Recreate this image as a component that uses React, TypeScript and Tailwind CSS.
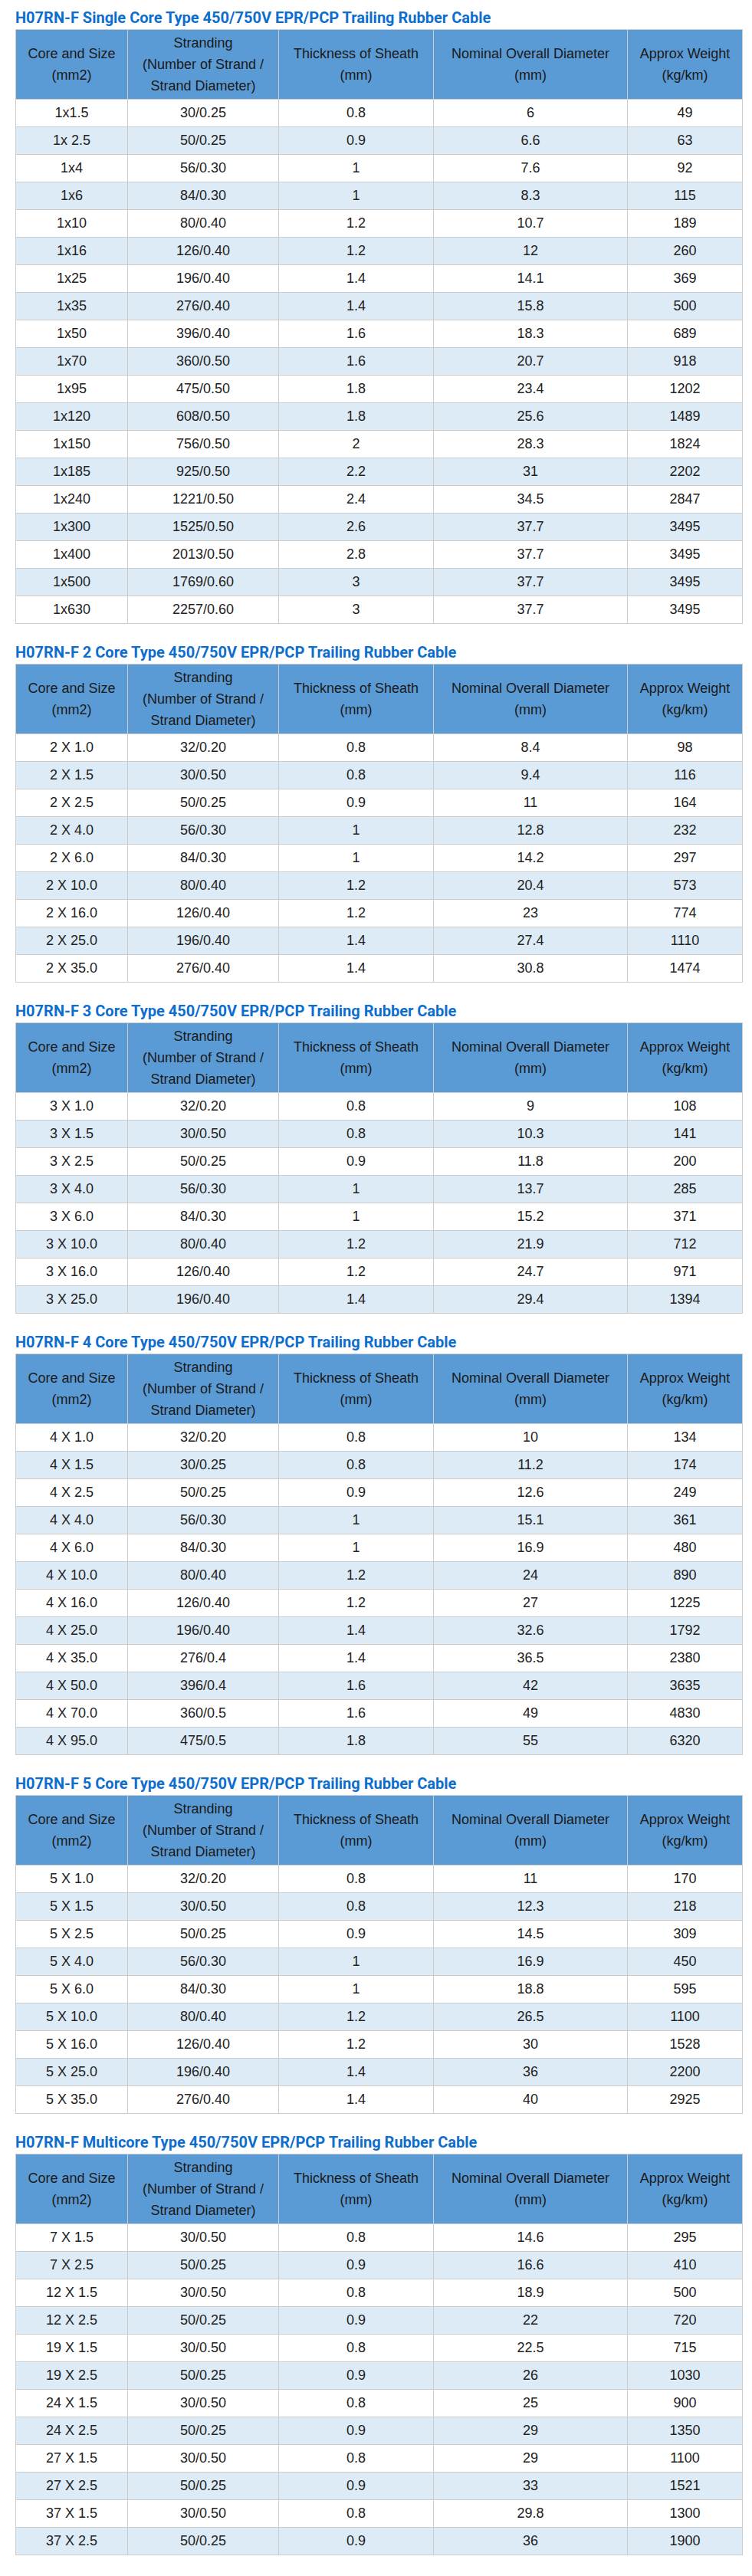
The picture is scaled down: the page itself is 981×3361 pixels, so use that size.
import React from "react";

type Row = [string, string, string, string, string];

const t1: Row[] = [
  ["1x1.5", "30/0.25", "0.8", "6", "49"],
  ["1x 2.5", "50/0.25", "0.9", "6.6", "63"],
  ["1x4", "56/0.30", "1", "7.6", "92"],
  ["1x6", "84/0.30", "1", "8.3", "115"],
  ["1x10", "80/0.40", "1.2", "10.7", "189"],
  ["1x16", "126/0.40", "1.2", "12", "260"],
  ["1x25", "196/0.40", "1.4", "14.1", "369"],
  ["1x35", "276/0.40", "1.4", "15.8", "500"],
  ["1x50", "396/0.40", "1.6", "18.3", "689"],
  ["1x70", "360/0.50", "1.6", "20.7", "918"],
  ["1x95", "475/0.50", "1.8", "23.4", "1202"],
  ["1x120", "608/0.50", "1.8", "25.6", "1489"],
  ["1x150", "756/0.50", "2", "28.3", "1824"],
  ["1x185", "925/0.50", "2.2", "31", "2202"],
  ["1x240", "1221/0.50", "2.4", "34.5", "2847"],
  ["1x300", "1525/0.50", "2.6", "37.7", "3495"],
  ["1x400", "2013/0.50", "2.8", "37.7", "3495"],
  ["1x500", "1769/0.60", "3", "37.7", "3495"],
  ["1x630", "2257/0.60", "3", "37.7", "3495"],
];

const t2: Row[] = [
  ["2 X 1.0", "32/0.20", "0.8", "8.4", "98"],
  ["2 X 1.5", "30/0.50", "0.8", "9.4", "116"],
  ["2 X 2.5", "50/0.25", "0.9", "11", "164"],
  ["2 X 4.0", "56/0.30", "1", "12.8", "232"],
  ["2 X 6.0", "84/0.30", "1", "14.2", "297"],
  ["2 X 10.0", "80/0.40", "1.2", "20.4", "573"],
  ["2 X 16.0", "126/0.40", "1.2", "23", "774"],
  ["2 X 25.0", "196/0.40", "1.4", "27.4", "1110"],
  ["2 X 35.0", "276/0.40", "1.4", "30.8", "1474"],
];

const t3: Row[] = [
  ["3 X 1.0", "32/0.20", "0.8", "9", "108"],
  ["3 X 1.5", "30/0.50", "0.8", "10.3", "141"],
  ["3 X 2.5", "50/0.25", "0.9", "11.8", "200"],
  ["3 X 4.0", "56/0.30", "1", "13.7", "285"],
  ["3 X 6.0", "84/0.30", "1", "15.2", "371"],
  ["3 X 10.0", "80/0.40", "1.2", "21.9", "712"],
  ["3 X 16.0", "126/0.40", "1.2", "24.7", "971"],
  ["3 X 25.0", "196/0.40", "1.4", "29.4", "1394"],
];

const t4: Row[] = [
  ["4 X 1.0", "32/0.20", "0.8", "10", "134"],
  ["4 X 1.5", "30/0.25", "0.8", "11.2", "174"],
  ["4 X 2.5", "50/0.25", "0.9", "12.6", "249"],
  ["4 X 4.0", "56/0.30", "1", "15.1", "361"],
  ["4 X 6.0", "84/0.30", "1", "16.9", "480"],
  ["4 X 10.0", "80/0.40", "1.2", "24", "890"],
  ["4 X 16.0", "126/0.40", "1.2", "27", "1225"],
  ["4 X 25.0", "196/0.40", "1.4", "32.6", "1792"],
  ["4 X 35.0", "276/0.4", "1.4", "36.5", "2380"],
  ["4 X 50.0", "396/0.4", "1.6", "42", "3635"],
  ["4 X 70.0", "360/0.5", "1.6", "49", "4830"],
  ["4 X 95.0", "475/0.5", "1.8", "55", "6320"],
];

const t5: Row[] = [
  ["5 X 1.0", "32/0.20", "0.8", "11", "170"],
  ["5 X 1.5", "30/0.50", "0.8", "12.3", "218"],
  ["5 X 2.5", "50/0.25", "0.9", "14.5", "309"],
  ["5 X 4.0", "56/0.30", "1", "16.9", "450"],
  ["5 X 6.0", "84/0.30", "1", "18.8", "595"],
  ["5 X 10.0", "80/0.40", "1.2", "26.5", "1100"],
  ["5 X 16.0", "126/0.40", "1.2", "30", "1528"],
  ["5 X 25.0", "196/0.40", "1.4", "36", "2200"],
  ["5 X 35.0", "276/0.40", "1.4", "40", "2925"],
];

const t6: Row[] = [
  ["7 X 1.5", "30/0.50", "0.8", "14.6", "295"],
  ["7 X 2.5", "50/0.25", "0.9", "16.6", "410"],
  ["12 X 1.5", "30/0.50", "0.8", "18.9", "500"],
  ["12 X 2.5", "50/0.25", "0.9", "22", "720"],
  ["19 X 1.5", "30/0.50", "0.8", "22.5", "715"],
  ["19 X 2.5", "50/0.25", "0.9", "26", "1030"],
  ["24 X 1.5", "30/0.50", "0.8", "25", "900"],
  ["24 X 2.5", "50/0.25", "0.9", "29", "1350"],
  ["27 X 1.5", "30/0.50", "0.8", "29", "1100"],
  ["27 X 2.5", "50/0.25", "0.9", "33", "1521"],
  ["37 X 1.5", "30/0.50", "0.8", "29.8", "1300"],
  ["37 X 2.5", "50/0.25", "0.9", "36", "1900"],
];

const sections: { title: string; rows: Row[] }[] = [
  { title: "H07RN-F Single Core Type 450/750V EPR/PCP Trailing Rubber Cable", rows: t1 },
  { title: "H07RN-F 2 Core Type 450/750V EPR/PCP Trailing Rubber Cable", rows: t2 },
  { title: "H07RN-F 3 Core Type 450/750V EPR/PCP Trailing Rubber Cable", rows: t3 },
  { title: "H07RN-F 4 Core Type 450/750V EPR/PCP Trailing Rubber Cable", rows: t4 },
  { title: "H07RN-F 5 Core Type 450/750V EPR/PCP Trailing Rubber Cable", rows: t5 },
  { title: "H07RN-F Multicore Type 450/750V EPR/PCP Trailing Rubber Cable", rows: t6 },
];

const th = "border border-[#cccccc] bg-[#5b9bd5] px-[4px] py-[3px] text-center align-middle font-normal text-[18px] leading-[28px] text-[#1a1a1a]";
const td = "border border-[#cccccc] px-[4px] py-[3px] text-center align-middle text-[18px] leading-[29px] text-[#222222]";

function CableTable({ rows }: { rows: Row[] }) {
  return (
    <table className="w-[948px] table-fixed border-collapse" style={{ fontFamily: '"Liberation Sans", Arial, sans-serif' }}>
      <colgroup>
        <col className="w-[146px]" />
        <col className="w-[197px]" />
        <col className="w-[202px]" />
        <col className="w-[253px]" />
        <col className="w-[150px]" />
      </colgroup>
      <thead>
        <tr>
          <th className={th}>Core and Size<br />(mm2)</th>
          <th className={th}>Stranding<br />(Number of Strand /<br />Strand Diameter)</th>
          <th className={th}>Thickness of Sheath<br />(mm)</th>
          <th className={th}>Nominal Overall Diameter<br />(mm)</th>
          <th className={th}>Approx Weight<br />(kg/km)</th>
        </tr>
      </thead>
      <tbody>
        {rows.map((r, i) => (
          <tr key={i} className={i % 2 === 1 ? "bg-[#ddebf7]" : "bg-white"}>
            {r.map((c, j) => (
              <td key={j} className={td}>{c}</td>
            ))}
          </tr>
        ))}
      </tbody>
    </table>
  );
}

export default function App() {
  return (
    <div className="min-h-[3361px] w-[981px] bg-white pl-[20px] pt-[10px] pb-[28px]">
      <div className="flex flex-col gap-[24px]">
        {sections.map((s, i) => (
          <section key={i} className="flex flex-col">
            <h3
              className="mb-[2px] text-[20px] font-bold leading-[26px] text-[#0d6ecd]"
              style={{ fontFamily: 'Roboto, "Liberation Sans", sans-serif' }}
            >
              {s.title}
            </h3>
            <CableTable rows={s.rows} />
          </section>
        ))}
      </div>
    </div>
  );
}
